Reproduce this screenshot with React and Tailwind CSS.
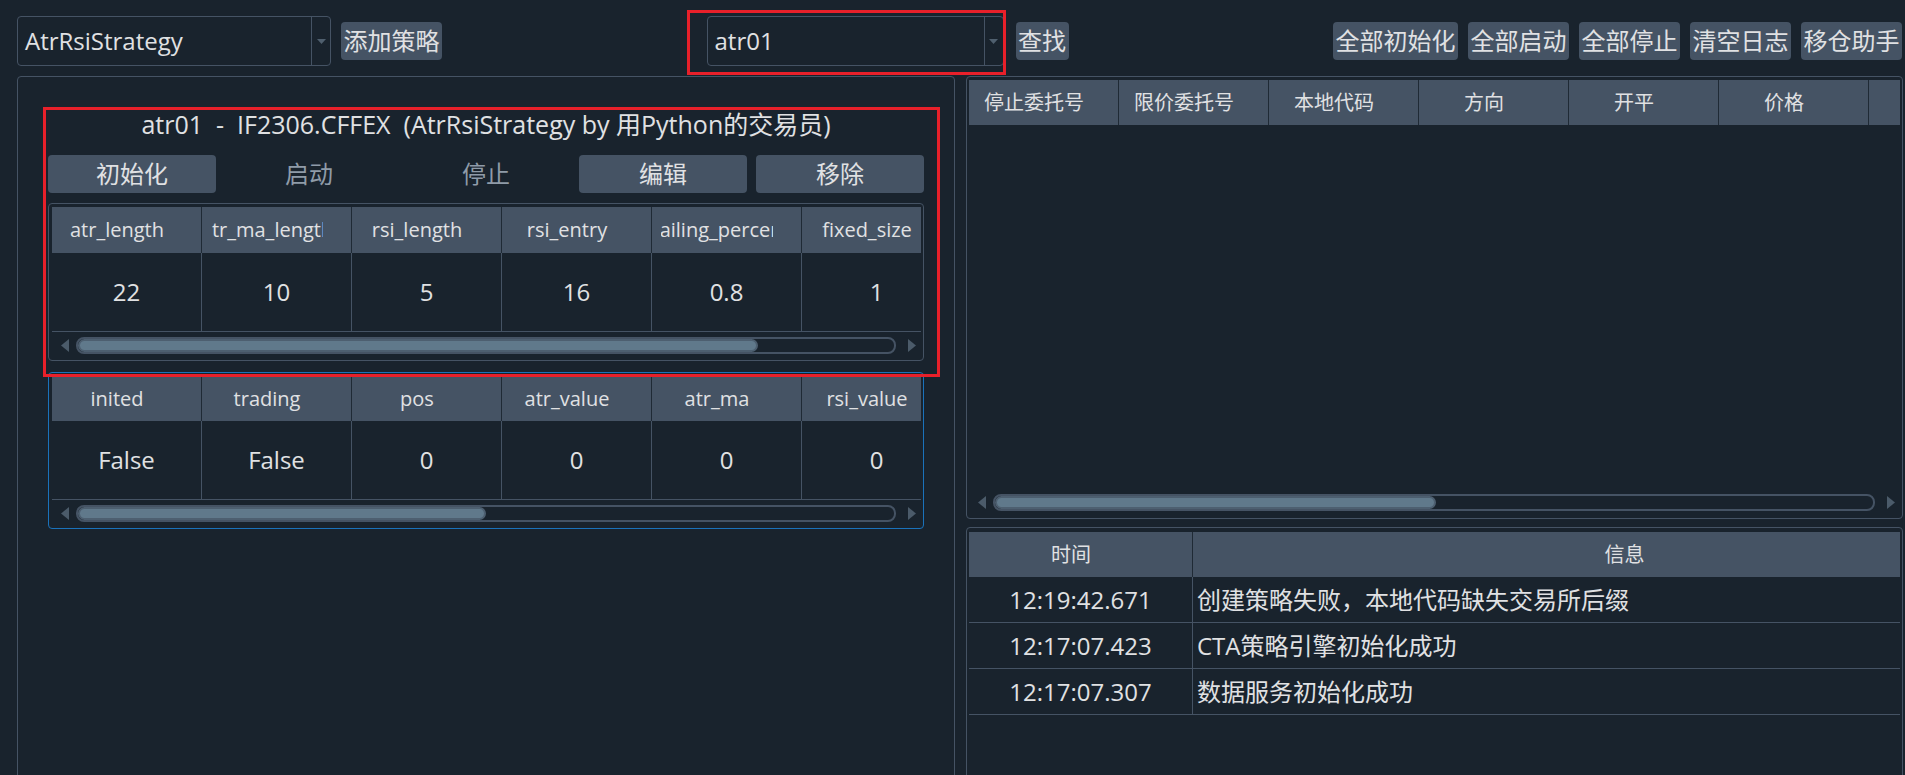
import React from "react";

const PARAMS = [
  ["atr_length", "22"],
  ["atr_ma_length", "10"],
  ["rsi_length", "5"],
  ["rsi_entry", "16"],
  ["trailing_percent", "0.8"],
  ["fixed_size", "1"],
];
const VARS = [
  ["inited", "False"],
  ["trading", "False"],
  ["pos", "0"],
  ["atr_value", "0"],
  ["atr_ma", "0"],
  ["rsi_value", "0"],
];
const ORDER_HEADERS = ["停止委托号", "限价委托号", "本地代码", "方向", "开平", "价格", "数量"];
const LOGS = [
  ["12:19:42.671", "创建策略失败，本地代码缺失交易所后缀"],
  ["12:17:07.423", "CTA策略引擎初始化成功"],
  ["12:17:07.307", "数据服务初始化成功"],
];

function DownArrow() {
  return (
    <svg width="9" height="5" viewBox="0 0 9 5">
      <polygon points="0,0 9,0 4.5,5" fill="#4f5f6e" />
    </svg>
  );
}

function Combo({ className, text }) {
  return (
    <div className={`flex h-[50px] items-stretch rounded-[4px] border border-[#455364] bg-[#19232D] ${className}`}>
      <div className="flex flex-1 items-center pl-[7px] text-[24px] leading-none">{text}</div>
      <div className="flex w-[19px] items-center justify-center border-l border-[#455364]">
        <DownArrow />
      </div>
    </div>
  );
}

function Btn({ className, children }) {
  return (
    <div className={`flex h-[38px] items-center justify-center rounded-[4px] bg-[#455364] text-[24px] leading-none text-[#E0E1E3] ${className}`}>
      {children}
    </div>
  );
}

function HScroll({ handleClass }) {
  return (
    <div className="flex h-[17px] items-center">
      <div className="flex w-[24px] items-center pl-[9px]">
        <svg width="8" height="13" viewBox="0 0 8 13">
          <polygon points="8,0 8,13 0,6.5" fill="#4b5b6a" />
        </svg>
      </div>
      <div className="flex h-[17px] flex-1 rounded-[8px] border-2 border-[#455364] bg-[#19232D]">
        <div className={`h-full rounded-[7px] border-2 border-[#4d5f70] bg-[#60798B] ${handleClass}`} />
      </div>
      <div className="flex w-[25px] items-center pl-[12px]">
        <svg width="8" height="13" viewBox="0 0 8 13">
          <polygon points="0,0 0,13 8,6.5" fill="#4b5b6a" />
        </svg>
      </div>
    </div>
  );
}

function HeaderCell({ className, children }) {
  return (
    <div className={`flex h-full shrink-0 border-r border-[#1f2a35] ${className}`}>
      <div className="flex flex-1 items-center justify-center overflow-hidden whitespace-nowrap">
        <span>{children}</span>
      </div>
    </div>
  );
}

function ParamTable({ rows, blue, handleClass }) {
  return (
    <div
      className={`flex flex-col rounded-[4px] border pl-[3px] pr-[2px] ${
        blue ? "border-[#1A72BB] pt-[4px]" : "border-[#455364] pt-[3px]"
      }`}
    >
      <div className="overflow-hidden">
        <div className={`flex w-max bg-[#455364] text-[20px] ${blue ? "h-[44px]" : "h-[46px]"}`}>
          {rows.map(([k]) => (
            <HeaderCell key={k} className="w-[150px] pl-[9px] pr-[28px]">
              {k}
            </HeaderCell>
          ))}
        </div>
        <div className="flex h-[79px] w-max border-b border-[#455364] text-[24px]">
          {rows.map(([k, v]) => (
            <div key={k} className="flex h-full w-[150px] shrink-0 items-center justify-center border-r border-[#455364]">
              {v}
            </div>
          ))}
        </div>
      </div>
      <div className="pb-[6px] pt-[5px]">
        <HScroll handleClass={handleClass} />
      </div>
    </div>
  );
}

export default function App() {
  return (
    <div className="relative h-[775px] w-[1905px] overflow-hidden bg-[#19232D] font-['Open_Sans','Noto_Sans_CJK_SC',sans-serif] text-[#E0E1E3]">
      {/* top bar */}
      <div className="mt-[16px] flex h-[50px] items-center pl-[17px] pr-[3px]">
        <Combo className="w-[314px]" text="AtrRsiStrategy" />
        <Btn className="ml-[10px] w-[101px]">添加策略</Btn>
        <div className="flex-1" />
        <Combo className="w-[297px]" text="atr01" />
        <Btn className="ml-[12px] w-[53px]">查找</Btn>
        <div className="flex-1" />
        <div className="flex gap-[10px]">
          <Btn className="w-[125px]">全部初始化</Btn>
          <Btn className="w-[101px]">全部启动</Btn>
          <Btn className="w-[101px]">全部停止</Btn>
          <Btn className="w-[101px]">清空日志</Btn>
          <Btn className="w-[101px]">移仓助手</Btn>
        </div>
      </div>

      {/* main area */}
      <div className="mt-[10px] flex h-[720px] gap-[11px] pl-[17px]">
        {/* left panel */}
        <div className="h-[720px] w-[938px] rounded-[4px] border border-[#455364] pl-[30px] pt-[31px]">
          <div className="flex w-[876px] flex-col">
            <div className="whitespace-pre text-center text-[25px] leading-[33px]">
              {"atr01  -  IF2306.CFFEX  (AtrRsiStrategy by 用Python的交易员)"}
            </div>
            <div className="mt-[14px] flex gap-[9px]">
              <Btn className="w-[168px]">初始化</Btn>
              <div className="flex h-[38px] w-[168px] items-center justify-center text-[24px] leading-none text-[#8f9ba8]">启动</div>
              <div className="flex h-[38px] w-[168px] items-center justify-center text-[24px] leading-none text-[#8f9ba8]">停止</div>
              <Btn className="w-[168px]">编辑</Btn>
              <Btn className="w-[168px]">移除</Btn>
            </div>
            <div className="mt-[10px]">
              <ParamTable rows={PARAMS} handleClass="w-[680px]" />
            </div>
            <div className="mt-[11px]">
              <ParamTable rows={VARS} blue handleClass="w-[408px]" />
            </div>
          </div>
        </div>

        {/* right panel */}
        <div className="flex w-[937px] flex-col gap-[8px]">
          <div className="flex h-[443px] shrink-0 flex-col rounded-[4px] border border-[#455364] px-[2px] pb-[7px] pt-[3px]">
            <div className="overflow-hidden">
              <div className="flex h-[45px] w-max bg-[#455364] text-[20px]">
                {ORDER_HEADERS.map((h) => (
                  <HeaderCell key={h} className="w-[150px] pl-[9px] pr-[28px]">
                    {h}
                  </HeaderCell>
                ))}
              </div>
            </div>
            <div className="flex-1" />
            <HScroll handleClass="w-[441px]" />
          </div>

          <div className="flex-1 rounded-[4px] border border-[#455364] px-[2px] pt-[4px]">
            <div className="flex h-[45px] bg-[#455364] text-[20px]">
              <HeaderCell className="w-[224px] pl-[9px] pr-[28px]">时间</HeaderCell>
              <HeaderCell className="flex-1 border-r-0 pl-[184px] pr-[28px]">信息</HeaderCell>
            </div>
            {LOGS.map(([t, m]) => (
              <div key={t} className="flex h-[46px] border-b border-[#455364] text-[24px]">
                <div className="flex w-[224px] items-center justify-center border-r border-[#455364]">{t}</div>
                <div className="flex flex-1 items-center whitespace-nowrap pl-[4px]">{m}</div>
              </div>
            ))}
          </div>
        </div>
      </div>

      {/* red annotation boxes */}
      <div className="pointer-events-none absolute left-[43px] top-[107px] h-[270px] w-[897px] border-[3px] border-[#e8202a]" />
      <div className="pointer-events-none absolute left-[687px] top-[10px] h-[65px] w-[319px] border-[3px] border-[#e8202a]" />
    </div>
  );
}
